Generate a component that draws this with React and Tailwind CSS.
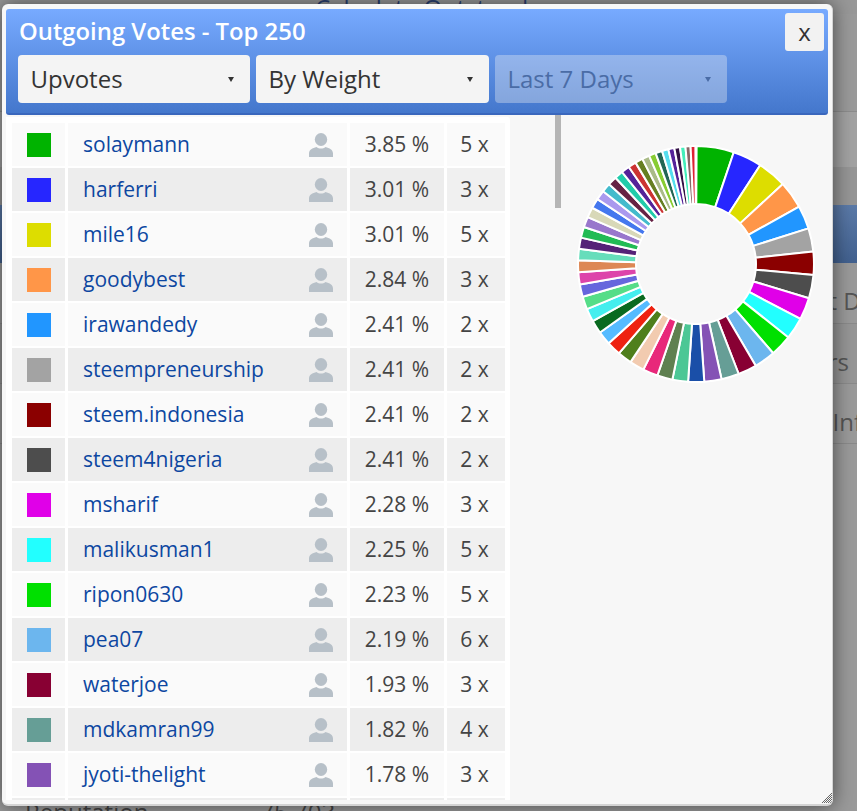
const font = { fontFamily: '"Open Sans", sans-serif' };

const rows = [
  ['#00b300', 'solaymann', '3.85 %', '5 x'],
  ['#2626ff', 'harferri', '3.01 %', '3 x'],
  ['#dddd00', 'mile16', '3.01 %', '5 x'],
  ['#ff9648', 'goodybest', '2.84 %', '3 x'],
  ['#2196ff', 'irawandedy', '2.41 %', '2 x'],
  ['#a3a3a3', 'steempreneurship', '2.41 %', '2 x'],
  ['#8b0000', 'steem.indonesia', '2.41 %', '2 x'],
  ['#4d4d4d', 'steem4nigeria', '2.41 %', '2 x'],
  ['#e000e8', 'msharif', '2.28 %', '3 x'],
  ['#22ffff', 'malikusman1', '2.25 %', '5 x'],
  ['#00e000', 'ripon0630', '2.23 %', '5 x'],
  ['#6cb6ee', 'pea07', '2.19 %', '6 x'],
  ['#880033', 'waterjoe', '1.93 %', '3 x'],
  ['#669e96', 'mdkamran99', '1.82 %', '4 x'],
  ['#8452b5', 'jyoti-thelight', '1.78 %', '3 x'],
];

const restColors = ['#1a4fa8','#4cc795','#5f8050','#e8287a','#f2cbb0','#4f7f1c','#ee2211','#55bbff','#0a6a1f','#44eeee','#55dd88','#6666dd','#dd44aa','#dd8855','#66ddbb','#552277','#22bb55','#9977cc','#d8d8b8','#4477ee','#aa99ee','#44bbcc','#662244','#22ccaa','#552299','#cc3333','#667f22','#aabb88','#88cc33','#226655','#55ddee','#552299','#331144','#44eebb','#886666','#dd2233'];

const weights = [
  ...rows.map((r) => [r[0], parseFloat(r[2])]),
  ...restColors.map((c, i) => [c, 1.65 - (1.16 * i) / (restColors.length - 1)]),
];
const total = weights.reduce((s, w) => s + w[1], 0);

function pt(r, deg) {
  const a = (deg * Math.PI) / 180;
  return `${(120 + r * Math.sin(a)).toFixed(2)} ${(120 - r * Math.cos(a)).toFixed(2)}`;
}

function Donut() {
  let at = 0.3;
  const span = 359.4;
  return (
    <svg width="240" height="240" viewBox="0 0 240 240">
      {weights.map(([color, w], i) => {
        const s = at;
        const e = at + (w / total) * span;
        at = e;
        const d = `M${pt(118, s)} A118 118 0 0 1 ${pt(118, e)} L${pt(60, e)} A60 60 0 0 0 ${pt(60, s)} Z`;
        return <path key={i} d={d} fill={color} stroke="#ffffff" strokeWidth="2" strokeLinejoin="round" />;
      })}
    </svg>
  );
}

function Person() {
  return (
    <svg width="24" height="24" viewBox="0 0 24 24" fill="#b7c0c8">
      <ellipse cx="12" cy="6.5" rx="6.2" ry="6.5" />
      <path d="M0 24v-3.5c0-3.6 3.5-5.6 7.5-6.5 1.3 1 2.8 1.5 4.5 1.5s3.200-.5 4.500-1.500c4 .9 7.500 2.900 7.500 6.500V24z" />
    </svg>
  );
}

function Caret({ className }) {
  return <span className={`w-0 h-0 border-l-[3px] border-r-[3px] border-t-[5px] border-l-transparent border-r-transparent ${className}`} />;
}

function Select({ label, disabled, wide }) {
  return (
    <div className={`${wide ? 'w-[233px]' : 'w-[232px]'} h-[48px] rounded-[4px] flex items-center justify-between pl-[12.5px] pr-[16px] text-[24px] ${disabled ? 'bg-[#f4f4f4]/35 text-[#4a6ca6]' : 'bg-[#f4f4f4] text-[#333333]'}`}>
      <span>{label}</span>
      <Caret className={disabled ? 'border-t-[#4a6ca6]' : 'border-t-[#333333]'} />
    </div>
  );
}

function Row({ row, even }) {
  const bg = even ? 'bg-[#ededed]' : 'bg-[#fafafa]';
  const bg2 = even ? 'bg-[#f0f0f0]' : 'bg-[#fafafa]';
  return (
    <div className="flex gap-[3px] h-[43px] shrink-0">
      <div className={`w-[53px] flex items-center justify-center ${bg}`}>
        <span className="w-[24px] h-[24px]" style={{ background: row[0] }} />
      </div>
      <div className={`w-[279px] flex items-center justify-between pl-[15px] pr-[14px] text-[#0d47a1] text-[21px] ${bg}`}>
        <span>{row[1]}</span>
        <Person />
      </div>
      <div className={`w-[94px] flex items-center justify-center text-[#444444] text-[21px] ${bg}`}>{row[2]}</div>
      <div className={`w-[58px] flex items-center justify-center pr-[3px] text-[#444444] text-[21px] ${bg2}`}>{row[3]}</div>
    </div>
  );
}

const handleDots = [];
for (let y = 0; y < 11; y++) {
  for (let x = 0; x < 12; x++) {
    if (x + y >= 11 && (x + y) % 2 === 0) handleDots.push([x, y]);
  }
}

export default function App() {
  return (
    <div style={font} className="relative w-[857px] h-[811px] overflow-hidden bg-[#999999]">
      <div className="flex flex-col h-full text-[#555555] text-[24px]">
        <div className="h-[14px] bg-[#989898] overflow-hidden pl-[315px] text-[#2a3f70] leading-[24px]">
          <div className="-mt-[4px]">Calculate Outstand</div>
        </div>
        <div className="h-[98px] bg-[#9a9a9a] border-b border-[#8c8c8c]" />
        <div className="h-[55px] bg-[#a2a2a2]" />
        <div className="h-[38px] bg-[#969696]" />
        <div className="h-[58px] bg-gradient-to-b from-[#5b7aa8] to-[#42618f]" />
        <div className="h-[60px] flex items-center justify-end pt-[16px] bg-[#9a9a9a]"><span className="mr-[-17px]">t Da</span></div>
        <div className="h-[60px] flex items-center justify-end pt-[16px] bg-[#969696] border-t border-[#8a8a8a]"><span className="mr-[8px]">rs</span></div>
        <div className="h-[60px] flex items-center justify-end pt-[16px] bg-[#9a9a9a] border-t border-[#8a8a8a]"><span className="mr-[-5px]">Inf</span></div>
        <div className="flex-1 flex items-end pl-[25px] gap-[112px] bg-[#9a9a9a] border-t border-[#8a8a8a] leading-[24px] text-[#444444]">
          <span className="translate-y-[13px]">Reputation</span>
          <span className="translate-y-[13px]">75,703</span>
        </div>
      </div>

      <div className="absolute left-[2px] top-[4px] w-[831px] h-[802px] bg-[#f7f7f7] rounded-[6px] border-b-2 border-r border-[#d4d4d4] shadow-[0_0_20px_rgba(0,0,0,0.55)] flex flex-col overflow-hidden">
        <div className="mx-[4px] mt-[5px] w-[822px] h-[106px] shrink-0 rounded-[3px] bg-gradient-to-b from-[#77aaff] to-[#4477cc] border-b-2 border-[#3a67bd] pl-[12px] flex flex-col">
          <div className="flex justify-between items-start h-[46px]">
            <div className="text-white font-semibold text-[23.85px] leading-[36px] pl-[2px] pt-[1px] mt-[0px]">
              <span className="relative top-[3px] -left-[1px]">Outgoing Votes - Top 250</span>
            </div>
            <div className="mt-[4px] mr-[4px] w-[39px] h-[38px] rounded-[3px] bg-[#f2f2f2] text-[#333333] text-[24px] flex items-center justify-center">x</div>
          </div>
          <div className="flex gap-[6px]">
            <Select label="Upvotes" />
            <Select label="By Weight" wide />
            <Select label="Last 7 Days" disabled />
          </div>
        </div>
        <div className="flex flex-1 min-h-0">
          <div className="ml-[4px] w-[504px] h-[683px] mt-[2px] bg-white pl-[6px] pt-[6px] overflow-hidden flex flex-col gap-[2px] rounded-tr-[3px]">
            {rows.map((r, i) => (
              <Row key={r[1]} row={r} even={i % 2 === 1} />
            ))}
            <div className="flex gap-[3px] h-[43px] shrink-0">
              <div className="w-[53px] bg-[#ededed]" />
              <div className="w-[279px] bg-[#ededed]" />
              <div className="w-[94px] bg-[#ededed]" />
              <div className="w-[58px] bg-[#f0f0f0]" />
            </div>
          </div>
          <div className="ml-[45px] w-[6px] h-[93px] bg-[#b5b5b5]" />
          <div className="ml-[15px] mt-[29px]">
            <Donut />
          </div>
        </div>
        <svg className="absolute right-[0px] bottom-[1px]" width="12" height="11" viewBox="0 0 12 11" fill="#666666">
          {handleDots.map(([x, y]) => (
            <rect key={`${x}-${y}`} x={x} y={y} width="1" height="1" />
          ))}
        </svg>
      </div>
    </div>
  );
}
